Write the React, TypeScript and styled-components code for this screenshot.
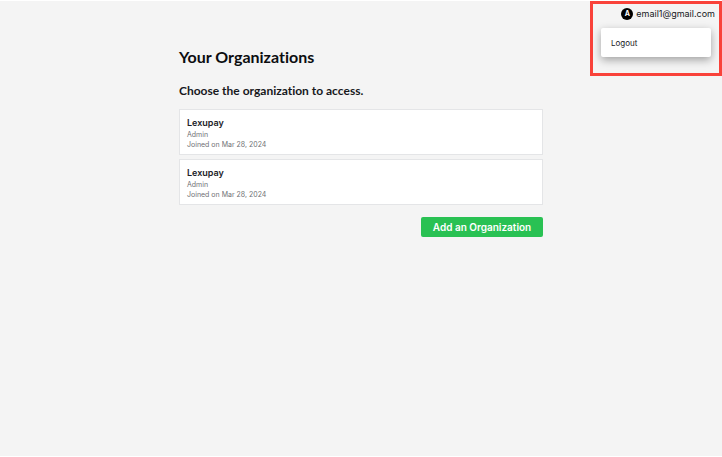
import React from "react";
import styled, { createGlobalStyle } from "styled-components";

const GlobalStyle = createGlobalStyle`
  *, *::before, *::after { box-sizing: border-box; }
  body {
    margin: 0;
    background: #f4f4f4;
    color: #17181c;
    font-family: Inter, "Open Sans", sans-serif;
    font-variant-ligatures: none;
  }
`;

const Page = styled.div`
  min-height: 100vh;
  border-top: 1px solid #ffffff;
  border-bottom: 1px solid #ffffff;
`;

const Header = styled.header`
  display: flex;
  justify-content: flex-end;
  height: 40px;
`;

const Account = styled.div`
  position: relative;
  padding: 6px 7px 0 0;
`;

const Highlight = styled.div`
  position: absolute;
  top: 0;
  right: 0;
  width: 132px;
  height: 75px;
  border: 3px solid #f9423a;
  pointer-events: none;
`;

const AccountButton = styled.button`
  display: flex;
  align-items: center;
  gap: 3px;
  height: 14px;
  padding: 0;
  border: 0;
  background: none;
  color: #17181c;
  font: 400 9px/14px Inter, sans-serif;
  cursor: pointer;
`;

const Avatar = styled.span`
  display: grid;
  place-items: center;
  width: 12px;
  height: 12px;
  border-radius: 50%;
  background: #000000;
  color: #ffffff;
  font: 700 7px/12px Inter, sans-serif;
`;

const Menu = styled.div`
  position: absolute;
  top: 27px;
  right: 11px;
  width: 110px;
  border-radius: 2px;
  background: #ffffff;
  box-shadow: 0 3px 8px rgba(0, 0, 0, 0.34);
`;

const MenuItem = styled.button`
  display: block;
  width: 100%;
  padding: 8px 10px 7px;
  border: 0;
  background: none;
  color: #17181c;
  font: 400 8px/14px Inter, sans-serif;
  text-align: left;
  cursor: pointer;
`;

const Main = styled.main`
  display: flex;
  flex-direction: column;
  width: calc(100% - 32px);
  max-width: 364px;
  margin: 0 auto;
  padding-top: 6px;
`;

const Title = styled.h1`
  margin: 0;
  color: #0c0d10;
  font: 700 16px/20px Lato, sans-serif;
  font-variant-ligatures: none;
`;

const Subtitle = styled.h2`
  margin: 16px 0 10px;
  font: 700 12px/16px Lato, sans-serif;
  font-variant-ligatures: none;
`;

const OrganizationList = styled.ul`
  display: grid;
  gap: 4px;
  margin: 0;
  padding: 0;
  list-style: none;
`;

const Organization = styled.button`
  display: block;
  width: 100%;
  padding: 6px 7px 4px;
  border: 1px solid #e4e5e7;
  background: #ffffff;
  text-align: left;
  cursor: pointer;
`;

const Name = styled.span`
  display: block;
  padding-bottom: 1px;
  color: #202126;
  font: 600 9px/13px Inter, sans-serif;
`;

const Detail = styled.span`
  display: block;
  color: #707175;
  font: 400 7px/10px Inter, sans-serif;
`;

const AddButton = styled.button`
  align-self: flex-end;
  min-width: 122px;
  margin-top: 12px;
  padding: 0 11px;
  border: 0;
  border-radius: 2px;
  background: #29c153;
  color: #ffffff;
  font: 600 10px/20px Inter, sans-serif;
  cursor: pointer;
`;

const organizations = [
  { id: 1, name: "Lexupay", role: "Admin", joined: "Mar 28, 2024" },
  { id: 2, name: "Lexupay", role: "Admin", joined: "Mar 28, 2024" },
];

export default function App() {
  return (
    <Page>
      <GlobalStyle />
      <Header>
        <Account>
          <Highlight />
          <AccountButton type="button" aria-haspopup="menu" aria-expanded="true">
            <Avatar>A</Avatar>
            email1@gmail.com
          </AccountButton>
          <Menu role="menu">
            <MenuItem type="button" role="menuitem">Logout</MenuItem>
          </Menu>
        </Account>
      </Header>
      <Main>
        <Title>Your Organizations</Title>
        <Subtitle>Choose the organization to access.</Subtitle>
        <OrganizationList>
          {organizations.map((org) => (
            <li key={org.id}>
              <Organization type="button">
                <Name>{org.name}</Name>
                <Detail>{org.role}</Detail>
                <Detail>Joined on {org.joined}</Detail>
              </Organization>
            </li>
          ))}
        </OrganizationList>
        <AddButton type="button">Add an Organization</AddButton>
      </Main>
    </Page>
  );
}
